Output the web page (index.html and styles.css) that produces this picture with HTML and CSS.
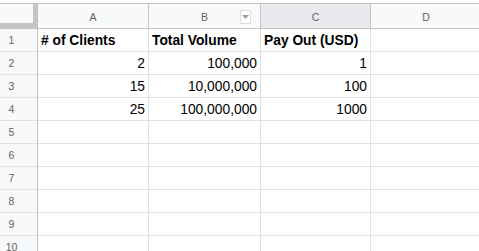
FILE: index.html
```html
<!DOCTYPE html>
<html>
<head>
<meta charset="utf-8">
<title>Sheet</title>
<link rel="stylesheet" href="styles.css">
</head>
<body>
<table class="grid">
<colgroup>
<col class="c-rh"><col class="c-a"><col class="c-b"><col class="c-c"><col class="c-d">
</colgroup>
<thead>
<tr>
<th class="corner"></th>
<th class="colhead">A</th>
<th class="colhead">B<span class="filter"><svg width="7" height="4" viewBox="0 0 7 4"><path d="M0 0h7L3.5 4z" fill="#9aa0a6"/></svg></span></th>
<th class="colhead sel">C</th>
<th class="colhead">D</th>
</tr>
</thead>
<tbody>
<tr><th class="rowhead">1</th><td class="b">#&nbsp;of Clients</td><td class="b">Total Volume</td><td class="b">Pay Out (USD)</td><td></td></tr>
<tr><th class="rowhead">2</th><td class="n">2</td><td class="n">100,000</td><td class="n">1</td><td></td></tr>
<tr><th class="rowhead">3</th><td class="n">15</td><td class="n">10,000,000</td><td class="n">100</td><td></td></tr>
<tr><th class="rowhead">4</th><td class="n">25</td><td class="n">100,000,000</td><td class="n">1000</td><td></td></tr>
<tr><th class="rowhead">5</th><td></td><td></td><td></td><td></td></tr>
<tr><th class="rowhead">6</th><td></td><td></td><td></td><td></td></tr>
<tr><th class="rowhead">7</th><td></td><td></td><td></td><td></td></tr>
<tr><th class="rowhead">8</th><td></td><td></td><td></td><td></td></tr>
<tr><th class="rowhead">9</th><td></td><td></td><td></td><td></td></tr>
<tr><th class="rowhead">10</th><td></td><td></td><td></td><td></td></tr>
</tbody>
</table>
</body>
</html>
```
FILE: styles.css
```css
html, body {
 margin: 0;
 background: #fff;
 overflow: hidden;
}
body {
 padding-top: 3px;
 font-family: Arial, 'Liberation Sans', sans-serif;
}
.grid {
 border-collapse: separate;
 border-spacing: 0;
 table-layout: fixed;
 width: 482px;
 border-top: 1px solid #c4c4c4;
}
.c-rh { width: 38px; }
.c-a { width: 111px; }
.c-b { width: 112px; }
.c-c { width: 110px; }
.c-d { width: 111px; }
th, td {
 padding: 0 3px;
 height: 22px;
 border-right: 1px solid #e2e2e3;
 border-bottom: 1px solid #e2e2e3;
 font-size: 13.8px;
 color: #000;
 white-space: nowrap;
 overflow: hidden;
 box-sizing: border-box;
}
td { height: 23px; }
thead th {
 height: 25px;
 background: #f8f9fa;
 border-bottom: 1px solid #c4c4c4;
 border-right-color: #c4c4c4;
}
.corner {
 padding: 0;
 background: #f8f9fa;
 box-shadow: inset -4px -5px 0 #c4c4c4;
}
.colhead {
 position: relative;
 font-weight: normal;
 font-size: 10.5px;
 color: #5f6368;
 text-align: center;
 padding-top: 1px;
}
.colhead.sel {
 background: #e8eaed;
}
.filter {
 position: absolute;
 left: 91px;
 top: 6px;
 width: 9px;
 height: 12px;
 border: 1px solid #dadce0;
 border-radius: 1px;
 background: #fff;
 display: flex;
 align-items: center;
 justify-content: center;
}
.rowhead {
 height: 23px;
 background: #f8f9fa;
 font-weight: normal;
 font-size: 10.5px;
 color: #5f6368;
 text-align: center;
 padding: 0 14px 0 0;
 border-right: 1px solid #c4c4c4;
 border-bottom: 1px solid #e2e2e3;
}
.b {
 font-weight: bold;
 text-align: left;
}
.n {
 text-align: right;
}
```
